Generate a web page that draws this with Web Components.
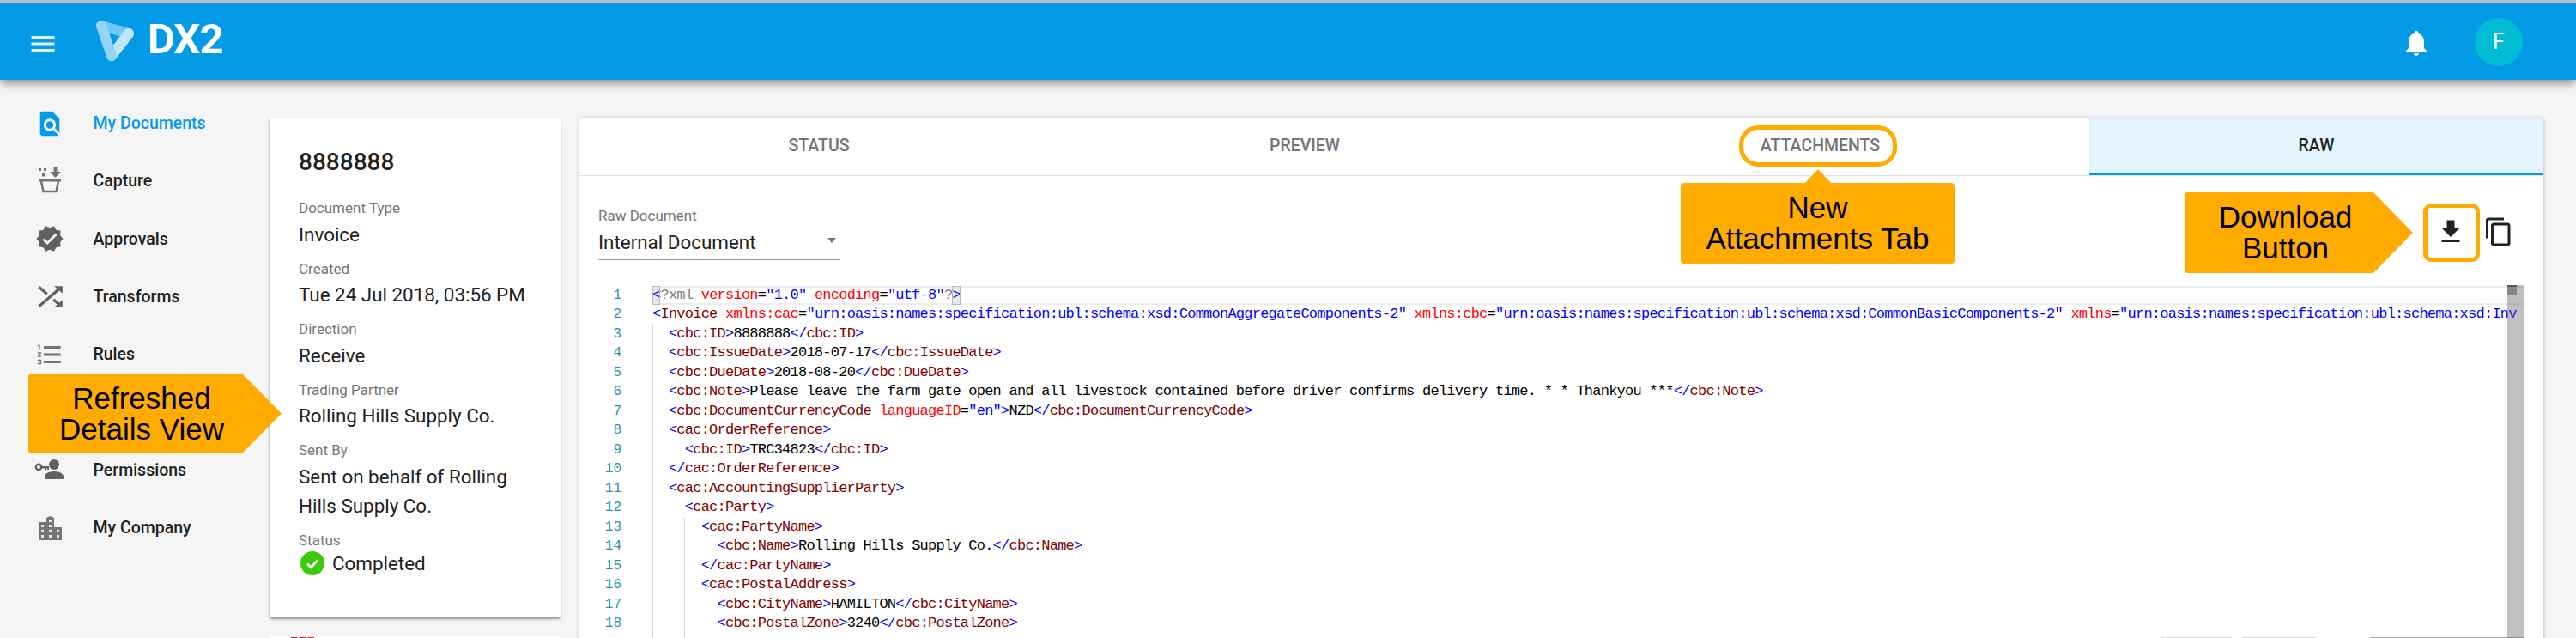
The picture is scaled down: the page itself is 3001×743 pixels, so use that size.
<!DOCTYPE html>
<html lang="en">
<head>
<meta charset="utf-8">
<title>DX2</title>
<style>
html,body{margin:0;padding:0;height:743px;overflow:hidden;background:#f5f5f5;font-family:Roboto,"Liberation Sans",sans-serif;color:#212121}
</style>
</head>
<body>
<dx-app>
  <dx-topbar slot="top"></dx-topbar>
  <dx-sidenav slot="side">
    <dx-nav-item icon="docs" active>My Documents</dx-nav-item>
    <dx-nav-item icon="capture">Capture</dx-nav-item>
    <dx-nav-item icon="approvals">Approvals</dx-nav-item>
    <dx-nav-item icon="transforms">Transforms</dx-nav-item>
    <dx-nav-item icon="rules">Rules</dx-nav-item>
    <dx-nav-item></dx-nav-item>
    <dx-nav-item icon="permissions">Permissions</dx-nav-item>
    <dx-nav-item icon="company">My Company</dx-nav-item>
  </dx-sidenav>
  <dx-details slot="details" heading="8888888">
    <dx-field label="Document Type">Invoice</dx-field>
    <dx-field label="Created">Tue 24 Jul 2018, 03:56 PM</dx-field>
    <dx-field label="Direction">Receive</dx-field>
    <dx-field label="Trading Partner">Rolling Hills Supply Co.</dx-field>
    <dx-field label="Sent By">Sent on behalf of Rolling Hills Supply Co.</dx-field>
    <dx-field label="Status" status>Completed</dx-field>
  </dx-details>
  <dx-panel slot="panel"></dx-panel>

  <dx-callout slot="over" dir="right" style="left:33px;top:435px;width:295px;height:93px">Refreshed<br>Details View</dx-callout>
  <dx-callout slot="over" dir="up" style="left:1958px;top:197px;width:319px;height:110px">New<br>Attachments Tab</dx-callout>
  <dx-callout slot="over" dir="right" style="left:2545px;top:224px;width:266px;height:94px">Download<br>Button</dx-callout>
  <dx-ring slot="over" style="left:2026px;top:146px;width:184px;height:48px;--r:22px"></dx-ring>
  <dx-ring slot="over" style="left:2823px;top:237px;width:66px;height:68px;--r:9px"></dx-ring>
</dx-app>

<script>
const ICONS = {
  docs:`<svg width="34" height="34" viewBox="0 0 24 24" fill="#039be5"><path d="M20 19.59V8l-6-6H6c-1.1 0-1.99.9-1.99 2L4 20c0 1.1.89 2 1.99 2H18c.45 0 .85-.15 1.19-.4l-4.43-4.43c-.8.52-1.74.83-2.76.83-2.76 0-5-2.24-5-5s2.24-5 5-5 5 2.24 5 5c0 1.02-.31 1.96-.83 2.75L20 19.59zM9 13c0 1.66 1.34 3 3 3s3-1.34 3-3-1.34-3-3-3-3 1.34-3 3z"/></svg>`,
  capture:`<svg width="30" height="34" viewBox="0 0 30 34" fill="#757575"><rect x="2" y="2" width="3" height="3"/><rect x="8" y="2" width="3" height="3"/><rect x="6" y="8" width="3.5" height="3.5"/><path d="M19.5 0h4v6h4.5l-6.5 7-6.5-7h4.5z"/><rect x="2" y="15" width="26" height="2.5"/><path d="M5 17l2.5 12h15L25 17" fill="none" stroke="#757575" stroke-width="2.5"/></svg>`,
  approvals:`<svg width="34" height="34" viewBox="0 0 24 24" fill="#616161"><path d="M23 12l-2.44-2.78.34-3.68-3.61-.82-1.89-3.18L12 3 8.6 1.54 6.71 4.72l-3.61.81.34 3.68L1 12l2.44 2.78-.34 3.69 3.61.82 1.89 3.18L12 21l3.4 1.46 1.89-3.18 3.61-.82-.34-3.68L23 12zm-13 5l-4-4 1.41-1.41L10 14.17l6.59-6.59L18 9l-8 8z"/></svg>`,
  transforms:`<svg width="43" height="37" viewBox="0 0 24 24" preserveAspectRatio="none" fill="#616161"><path d="M10.59 9.17L5.41 4 4 5.41l5.17 5.17 1.42-1.41zM14.5 4l2.04 2.04L4 18.59 5.41 20 17.96 7.46 20 9.5V4h-5.5zm.33 9.41l-1.41 1.41 3.13 3.13L14.5 20H20v-5.5l-2.04 2.04-3.13-3.13z"/></svg>`,
  rules:`<svg width="34" height="34" viewBox="0 0 24 24" fill="#757575"><path d="M2 17h2v.5H3v1h1v.5H2v1h3v-4H2v1zm1-9h1V4H2v1h1v3zm-1 3h1.8L2 13.1v.9h3v-1H3.2L5 10.9V10H2v1zm5-6v2h14V5H7zm0 14h14v-2H7v2zm0-6h14v-2H7v2z"/></svg>`,
  permissions:`<svg width="36" height="26" viewBox="0 0 36 26" fill="#616161"><circle cx="23" cy="7" r="6"/><path d="M12 24v-3c0-4 6-6 11-6s11 2 11 6v3z"/><circle cx="5" cy="10" r="3.2" fill="none" stroke="#616161" stroke-width="2.4"/><rect x="8" y="9" width="9" height="2.4"/><rect x="12" y="11" width="2" height="2.6"/><rect x="15" y="11" width="2" height="2"/></svg>`,
  company:`<svg width="27" height="28" viewBox="0 0 27 28" fill="#757575"><path d="M0 7h9V2l4.5-2L18 2v11h9v15H0z"/><g fill="#e6e6e6"><rect x="3" y="10" width="3" height="3"/><rect x="3" y="16" width="3" height="3"/><rect x="3" y="22" width="3" height="3"/><rect x="12" y="4" width="3" height="3"/><rect x="12" y="10" width="3" height="3"/><rect x="12" y="16" width="3" height="3"/><rect x="12" y="22" width="3" height="3"/><rect x="21" y="16" width="3" height="3"/><rect x="21" y="22" width="3" height="3"/></g></svg>`
};

function shadow(el, html){ el.attachShadow({mode:'open'}).innerHTML = html; return el.shadowRoot; }

class DxApp extends HTMLElement{
  constructor(){super();shadow(this,`<style>
    :host{display:block;position:relative;width:3001px;height:743px;overflow:hidden;background:#f5f5f5}
    .body{display:flex;height:650px;overflow:hidden}
    .col{padding-top:44px;flex:none}
    .details{width:339px;margin-right:22px}
    .panel{width:2289px}
  </style>
  <slot name="top"></slot>
  <div class="body">
    <slot name="side"></slot>
    <div class="col details"><slot name="details"></slot></div>
    <div class="col panel"><slot name="panel"></slot></div>
  </div>
  <slot name="over"></slot>`);}
}

class DxTopbar extends HTMLElement{
  constructor(){super();shadow(this,`<style>
    :host{display:flex;position:relative;z-index:2;height:90px;box-sizing:content-box;background:#039be5;border-top:3px solid #bdbdbd;box-shadow:0 4px 10px rgba(0,0,0,.42);align-items:flex-start;padding-left:32px;padding-right:62px}
    .menu{margin-top:30px;flex:none;display:block}
    .logo{margin:18px 0 0 42px;flex:none;display:block}
    .word{margin:14px 0 0 14px;font:700 49px/58px Roboto,sans-serif;color:#fff;letter-spacing:-1px}
    .sp{flex:1}
    .bell{margin-top:29px;flex:none;display:block}
    .av{margin:18px 0 0 50px;width:56px;height:56px;border-radius:50%;background:#00bcd4;color:#fff;font:400 25px/56px Roboto,sans-serif;text-align:center;flex:none}
  </style>
  <svg class="menu" width="36" height="36" viewBox="0 0 24 24" fill="#dff3fc"><path d="M3 18h18v-2H3v2zm0-5h18v-2H3v2zm0-7v2h18V6H3z"/></svg>
  <svg class="logo" width="48" height="51" viewBox="0 0 48 51" fill="none" stroke-linecap="round" stroke-linejoin="round" stroke-width="12">
    <path d="M8 9L40 18" stroke="#6fc6f4"/><path d="M40 18L20 44" stroke="#bfe6fa"/><path d="M8 9L20 44" stroke="#94d4f7"/>
  </svg>
  <div class="word">DX2</div>
  <div class="sp"></div>
  <svg class="bell" width="36" height="36" viewBox="0 0 24 24" fill="#fff"><path d="M12 22c1.1 0 2-.9 2-2h-4c0 1.1.89 2 2 2zm6-6v-5c0-3.07-1.64-5.64-4.5-6.32V4c0-.83-.67-1.5-1.5-1.5s-1.5.67-1.5 1.5v.68C7.63 5.36 6 7.92 6 11v5l-2 2v1h16v-1l-2-2z"/></svg>
  <div class="av">F</div>`);}
}

class DxSidenav extends HTMLElement{
  constructor(){super();shadow(this,`<style>:host{display:block;flex:none;width:314px;padding-top:17px;box-sizing:border-box}</style><slot></slot>`);}
}

class DxNavItem extends HTMLElement{
  connectedCallback(){
    if(this.shadowRoot) return;
    const i=this.getAttribute('icon');
    const on=this.hasAttribute('active');
    shadow(this,`<style>
      :host{display:flex;height:67.3px;align-items:center;font:500 19.5px Roboto,sans-serif;color:${on?'#039be5':'#212121'}}
      .in{width:116px;margin-right:-7.5px;display:flex;justify-content:center;flex:none}
      svg{display:block}
    </style><div class="in">${i?ICONS[i]:''}</div><span><slot></slot></span>`);
  }
}

class DxDetails extends HTMLElement{
  connectedCallback(){
    if(this.shadowRoot) return;
    shadow(this,`<style>
      :host{display:block}
      .card{background:#fff;border-radius:3px;box-shadow:0 2px 3px rgba(0,0,0,.4);padding:32px 30px 49px 34px;height:501px;box-sizing:content-box}
      h2{margin:0 0 21px;font:500 28px/40px Roboto,sans-serif;color:#212121}
      .next{margin-top:22px;height:60px;background:#fff;border-radius:3px;padding-left:25px;padding-top:1px}
      .mark{width:27px;height:2px;background:repeating-linear-gradient(90deg,#e01010 0 7px,#f5b5b5 7px 10px)}
    </style>
    <div class="card"><h2>${this.getAttribute('heading')}</h2><slot></slot></div>
    <div class="next"><div class="mark"></div></div>`);
  }
}

class DxField extends HTMLElement{
  connectedCallback(){
    if(this.shadowRoot) return;
    const st=this.hasAttribute('status');
    shadow(this,`<style>
      :host{display:block;margin-bottom:11px}
      .l{font:400 17px/24px Roboto,sans-serif;color:#757575;margin-bottom:1.5px}
      .v{font:400 22.4px/34px Roboto,sans-serif;color:#212121}
      .s{display:flex;align-items:center;height:28px;line-height:28px;padding-left:2px;gap:9px}
      svg{display:block;flex:none}
    </style>
    <div class="l">${this.getAttribute('label')}</div>
    <div class="v ${st?'s':''}">${st?`<svg width="28" height="28" viewBox="0 0 28 28"><circle cx="14" cy="14" r="14" fill="#3ccb0a"/><path d="M8 14.5l4.2 4.2L20 10.5" fill="none" stroke="#fff" stroke-width="3"/></svg>`:''}<span><slot></slot></span></div>`);
  }
}

class DxPanel extends HTMLElement{
  constructor(){super();shadow(this,`<style>
    :host{display:block;background:#fff;border-radius:3px 3px 0 0;box-shadow:0 1px 4px rgba(0,0,0,.3);width:2288px;height:640px;overflow:hidden}
    .bar{display:flex;height:127px;box-sizing:border-box}
    .sel{margin:35px 0 0 22px;width:282px;flex:none}
    .sel .l{font:400 17px/22px Roboto,sans-serif;color:#757575}
    .sel .b{display:flex;height:41px;align-items:center;justify-content:space-between;border-bottom:1px solid #9e9e9e;box-sizing:border-box;font:400 22.4px Roboto,sans-serif;color:#212121}
    .car{width:0;height:0;border-left:5.5px solid transparent;border-right:5.5px solid transparent;border-top:6px solid #757575;margin-right:5px;margin-bottom:4px}
    .sp{flex:1}
    .acts{display:flex;gap:20px;margin:47px 34px 0 0;height:36px}
    .acts svg{display:block}
  </style>
  <dx-tabs></dx-tabs>
  <div class="bar">
    <div class="sel"><div class="l">Raw Document</div><div class="b"><span>Internal Document</span><i class="car"></i></div></div>
    <div class="sp"></div>
    <div class="acts">
      <svg width="36" height="36" viewBox="0 0 24 24" fill="#212121"><path d="M19 9h-4V3H9v6H5l7 7 7-7zM5 18v2h14v-2H5z"/></svg>
      <svg width="36" height="36" viewBox="0 0 24 24" fill="#212121"><path d="M16 1H4c-1.1 0-2 .9-2 2v14h2V3h12V1zm3 4H8c-1.1 0-2 .9-2 2v14c0 1.1.9 2 2 2h11c1.1 0 2-.9 2-2V7c0-1.1-.9-2-2-2zm0 16H8V7h11v14z"/></svg>
    </div>
  </div>
  <dx-editor></dx-editor>`);}
}

class DxTabs extends HTMLElement{
  constructor(){super();shadow(this,`<style>
    :host{display:grid;grid-template-columns:558px 574px 627px 529px;height:68px;border-bottom:1px solid #e0e0e0;box-sizing:border-box}
    div{display:flex;align-items:center;justify-content:center;font:500 19.5px Roboto,sans-serif;color:#757575;padding-bottom:2px;box-sizing:border-box}
    .on{background:#e3f4fd;color:#212121;border-bottom:3px solid #039be5;padding-bottom:0}
  </style><div>STATUS</div><div>PREVIEW</div><div>ATTACHMENTS</div><div class="on">RAW</div>`);}
}

const XML = [
 '<?xml version="1.0" encoding="utf-8"?>',
 '<Invoice xmlns:cac="urn:oasis:names:specification:ubl:schema:xsd:CommonAggregateComponents-2" xmlns:cbc="urn:oasis:names:specification:ubl:schema:xsd:CommonBasicComponents-2" xmlns="urn:oasis:names:specification:ubl:schema:xsd:Inv',
 '  <cbc:ID>8888888</cbc:ID>',
 '  <cbc:IssueDate>2018-07-17</cbc:IssueDate>',
 '  <cbc:DueDate>2018-08-20</cbc:DueDate>',
 '  <cbc:Note>Please leave the farm gate open and all livestock contained before driver confirms delivery time. * * Thankyou ***</cbc:Note>',
 '  <cbc:DocumentCurrencyCode languageID="en">NZD</cbc:DocumentCurrencyCode>',
 '  <cac:OrderReference>',
 '    <cbc:ID>TRC34823</cbc:ID>',
 '  </cac:OrderReference>',
 '  <cac:AccountingSupplierParty>',
 '    <cac:Party>',
 '      <cac:PartyName>',
 '        <cbc:Name>Rolling Hills Supply Co.</cbc:Name>',
 '      </cac:PartyName>',
 '      <cac:PostalAddress>',
 '        <cbc:CityName>HAMILTON</cbc:CityName>',
 '        <cbc:PostalZone>3240</cbc:PostalZone>'
];
const esc=s=>s.replace(/&/g,'&amp;').replace(/</g,'&lt;').replace(/>/g,'&gt;');
function hl(line,n){
  return line.replace(/<[^>]*>?|[^<]+/g,tok=>{
    if(tok[0]!=='<') return `<span class="t">${esc(tok)}</span>`;
    const m=tok.match(/^(<\/?\??)([^\s>?]+)([\s\S]*?)(\??>)?$/);
    const end=m[4]||'';
    const open=n===0?`<span class="bx">&lt;</span><span class="g">?</span>`:`<span class="d">${esc(m[1])}</span>`;
    const close=n===0?`<span class="g">?</span><span class="bx">&gt;</span>`:(end?`<span class="d">${esc(end)}</span>`:'');
    const attrs=m[3].replace(/([^\s=]+)(=)("[^"]*"?)/g,(a,k,e,v)=>`<span class="a">${k}</span><span class="t">=</span><span class="d">${esc(v)}</span>`);
    return open+`<span class="${n===0?'g':'n'}">${m[2]}</span>`+attrs+close;
  });
}
class DxEditor extends HTMLElement{
  constructor(){super();
    const rows=XML.map((l,i)=>{
      const c=i===0?'act':i>=12?'g2':i>=2?'g1':'';
      return `<div class="row"><div class="no">${i+1}</div><div class="code ${c}">${hl(l,i)}</div></div>`;
    }).join('');
    shadow(this,`<style>
      :host{display:block;position:relative;margin-right:22px;height:420px;overflow:hidden;padding-top:.5px;font:400 17px "Liberation Mono",monospace}
      .row{display:grid;grid-template-columns:49px 1fr;column-gap:36px;height:22.5px;line-height:22.5px}
      .no{text-align:right;color:#2b91af;font-size:16px}
      .code{white-space:pre;overflow:hidden;box-sizing:border-box;min-width:0;letter-spacing:-.76px}
      .act{box-shadow:inset 0 2px #eee,inset 0 -2px #eee}
      .g1{background:linear-gradient(#d3d3d3,#d3d3d3) 0 0/1px 100% no-repeat}
      .g2{background:linear-gradient(#d3d3d3,#d3d3d3) 0 0/1px 100% no-repeat,linear-gradient(#d3d3d3,#d3d3d3) 37px 0/1px 100% no-repeat}
      .tail{height:20px}
      .d{color:#0000ff}.n{color:#800000}.a{color:#ff0000}.t{color:#000}.g{color:#808080}
      .bx{display:inline-block;height:22.5px;background:#e8e8e8;outline:1px solid #b9b9b9;outline-offset:-1px;color:#0000ff;vertical-align:top;line-height:22.5px}
      .sb{position:absolute;right:1px;top:0;bottom:0;width:19px;background:rgba(90,90,90,.38)}
      .sb i{display:block;width:11px;height:10px;background:#888;border-top:2px solid #555}
      .peek{position:absolute;left:1842px;top:409.5px;height:2px;width:424px;background:
        linear-gradient(90deg,#d8d8d8 0 83px,transparent 83px 95px,#d8d8d8 95px 181px,transparent 181px 244px,#aaa 244px 424px)}
    </style>
    ${rows}
    <div class="row tail"><div class="no"></div><div class="code g2" style="height:40px"></div></div>
    <div class="peek"></div>
    <div class="sb"><i></i></div>`);
  }
}

class DxCallout extends HTMLElement{
  connectedCallback(){
    if(this.shadowRoot) return;
    const up=this.getAttribute('dir')==='up';
    shadow(this,`<style>
      :host{display:block;position:absolute;z-index:5;font:400 35px/36px "Liberation Sans",Arial,sans-serif;color:#000}
      .b{position:absolute;background:#ffab00;border-radius:4px;display:flex;align-items:center;justify-content:center;text-align:center;box-sizing:border-box}
      .tip{position:absolute;background:#ffab00}
      .right .b{left:0;top:0;bottom:0;right:45px;padding-left:14px}
      .right .tip{right:0;top:0;bottom:0;width:46px;clip-path:polygon(0 0,100% 50%,0 100%)}
      .up .b{left:0;right:0;top:16px;bottom:0}
      .up .tip{left:144px;top:0;width:32px;height:17px;clip-path:polygon(50% 0,100% 100%,0 100%)}
      .w{position:absolute;inset:0}
    </style><div class="w ${up?'up':'right'}"><div class="tip"></div><div class="b"><div><slot></slot></div></div></div>`);
  }
}

class DxRing extends HTMLElement{
  constructor(){super();shadow(this,`<style>:host{display:block;position:absolute;z-index:5;box-sizing:border-box;border:5px solid #ffab00;border-radius:var(--r)}</style>`);}
}

customElements.define('dx-app',DxApp);
customElements.define('dx-topbar',DxTopbar);
customElements.define('dx-sidenav',DxSidenav);
customElements.define('dx-nav-item',DxNavItem);
customElements.define('dx-details',DxDetails);
customElements.define('dx-field',DxField);
customElements.define('dx-tabs',DxTabs);
customElements.define('dx-editor',DxEditor);
customElements.define('dx-panel',DxPanel);
customElements.define('dx-callout',DxCallout);
customElements.define('dx-ring',DxRing);
</script>
</body>
</html>
